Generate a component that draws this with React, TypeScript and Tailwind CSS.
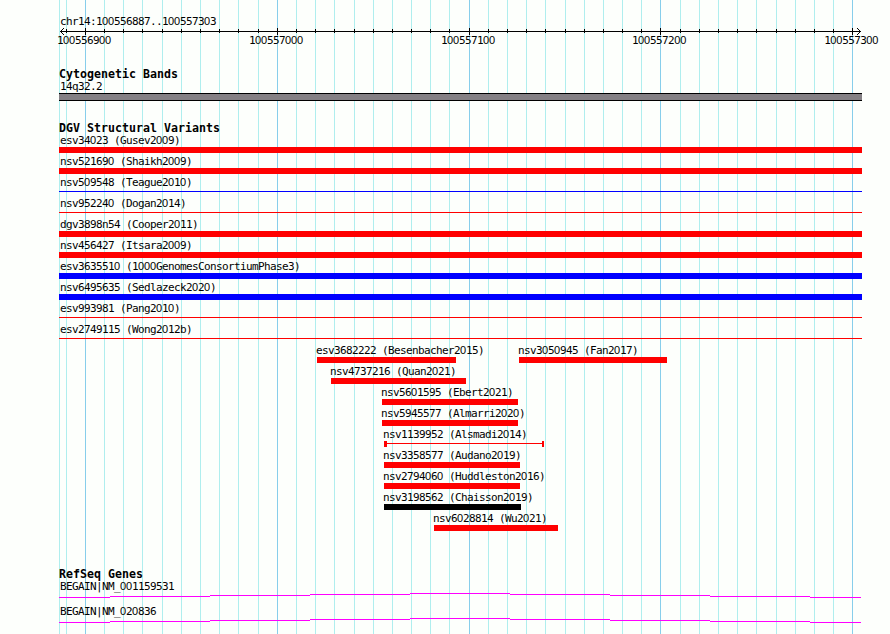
const LIGHT_LINES = [
  59, 66, 104, 123, 142, 162, 181, 200, 219, 238, 258, 296, 315, 334, 354, 373, 392, 411, 430, 449,
  488, 507, 526, 545, 565, 584, 603, 622, 641, 680, 699, 718, 737, 756, 776, 795, 814, 833,
];
const DARK_LINES = [85, 277, 469, 660, 852];

type Variant = { name: string; x: number; w: number; kind: "bar" | "line" | "range"; color: string };

const red = "bg-[#ff0000]";
const blue = "bg-[#0000ff]";

const variants: Variant[][] = [
  [{ name: "esv34023 (Gusev2009)", x: 59, w: 803, kind: "bar", color: red }],
  [{ name: "nsv521690 (Shaikh2009)", x: 59, w: 803, kind: "bar", color: red }],
  [{ name: "nsv509548 (Teague2010)", x: 59, w: 803, kind: "line", color: blue }],
  [{ name: "nsv952240 (Dogan2014)", x: 59, w: 803, kind: "line", color: red }],
  [{ name: "dgv3898n54 (Cooper2011)", x: 59, w: 803, kind: "bar", color: red }],
  [{ name: "nsv456427 (Itsara2009)", x: 59, w: 803, kind: "bar", color: red }],
  [{ name: "esv3635510 (1000GenomesConsortiumPhase3)", x: 59, w: 803, kind: "bar", color: blue }],
  [{ name: "nsv6495635 (Sedlazeck2020)", x: 59, w: 803, kind: "bar", color: blue }],
  [{ name: "esv993981 (Pang2010)", x: 59, w: 803, kind: "line", color: red }],
  [{ name: "esv2749115 (Wong2012b)", x: 59, w: 803, kind: "line", color: red }],
  [
    { name: "esv3682222 (Besenbacher2015)", x: 317, w: 139, kind: "bar", color: red },
    { name: "nsv3050945 (Fan2017)", x: 519, w: 148, kind: "bar", color: red },
  ],
  [{ name: "nsv4737216 (Quan2021)", x: 331, w: 135, kind: "bar", color: red }],
  [{ name: "nsv5601595 (Ebert2021)", x: 382, w: 136, kind: "bar", color: red }],
  [{ name: "nsv5945577 (Almarri2020)", x: 382, w: 136, kind: "bar", color: red }],
  [{ name: "nsv1139952 (Alsmadi2014)", x: 384, w: 160, kind: "range", color: red }],
  [{ name: "nsv3358577 (Audano2019)", x: 384, w: 136, kind: "bar", color: red }],
  [{ name: "nsv2794060 (Huddleston2016)", x: 384, w: 136, kind: "bar", color: red }],
  [{ name: "nsv3198562 (Chaisson2019)", x: 384, w: 137, kind: "bar", color: "bg-black" }],
  [{ name: "nsv6028814 (Wu2021)", x: 434, w: 124, kind: "bar", color: red }],
];

const genes = ["BEGAIN|NM_001159531", "BEGAIN|NM_020836"];

function Gridlines() {
  return (
    <svg className="absolute inset-0" width="890" height="634" shapeRendering="crispEdges">
      {LIGHT_LINES.map((x) => (
        <rect key={x} x={x} y={0} width={1} height={634} fill="#afeeee" />
      ))}
      {DARK_LINES.map((x) => (
        <rect key={x} x={x} y={0} width={1} height={634} fill="#87ceeb" />
      ))}
    </svg>
  );
}

function Label({ text }: { text: string }) {
  // the font's zero is dotted, so zeros are taken from the sans face
  return (
    <span className="block h-3 whitespace-pre text-[11px] leading-3 tracking-[-0.622px]">
      {text.split(/(0)/).map((part, i) =>
        part === "0" ? (
          <span key={i} className="font-['Liberation_Sans'] tracking-[-0.118px]">0</span>
        ) : (
          part
        ),
      )}
    </span>
  );
}

function Heading({ text }: { text: string }) {
  return (
    <h2 className="ml-[59px] h-[13px] whitespace-pre text-[11.6px] font-bold leading-[13px] tracking-[0.016px]">
      {text}
    </h2>
  );
}

function Ruler() {
  return (
    <svg className="block" width="890" height="8" viewBox="0 27 890 8" shapeRendering="crispEdges">
      <rect x={60} y={31} width={801} height={1} />
      {LIGHT_LINES.slice(1).map((x) => (
        <rect key={x} x={x} y={29} width={1} height={4} />
      ))}
      {DARK_LINES.map((x) => (
        <rect key={x} x={x} y={28} width={1} height={7} />
      ))}
      <path d="M61 30h1v1h-1zM62 29h1v1h-1zM63 28h1v1h-1zM61 32h1v1h-1zM62 33h1v1h-1zM63 34h1v1h-1z" />
      <path d="M859 30h1v1h-1zM858 29h1v1h-1zM857 28h1v1h-1zM859 32h1v1h-1zM858 33h1v1h-1zM857 34h1v1h-1z" />
    </svg>
  );
}

function Glyph({ kind, color }: { kind: Variant["kind"]; color: string }) {
  if (kind === "bar") return <div className={`h-1.5 ${color}`} />;
  if (kind === "line") return <div className="pt-0.5"><div className={`h-px ${color}`} /></div>;
  return (
    <div className="flex h-1.5 items-start">
      <div className={`h-1.5 w-[3px] ${color}`} />
      <div className={`mt-0.5 h-px grow ${color}`} />
      <div className={`h-1.5 w-0.5 ${color}`} />
    </div>
  );
}

function VariantRow({ items }: { items: Variant[] }) {
  return (
    <div className="grid h-[21px]">
      {items.map((v) => (
        <div key={v.name} className="col-start-1 row-start-1" style={{ marginLeft: v.x, width: v.w }}>
          <div className={v.x === 59 ? "ml-px h-[13px]" : "-ml-px h-[13px]"}>
            <Label text={v.name} />
          </div>
          <Glyph kind={v.kind} color={v.color} />
        </div>
      ))}
    </div>
  );
}

function GeneRow({ name }: { name: string }) {
  return (
    <div className="h-[25px]">
      <div className="ml-[60px] h-[13px]">
        <Label text={name} />
      </div>
      <svg className="block" width="890" height="6" shapeRendering="crispEdges" fill="#ff00ff">
        <rect x={59} y={4} width={51} height={1} />
        <rect x={110} y={3} width={100} height={1} />
        <rect x={210} y={2} width={100} height={1} />
        <rect x={310} y={1} width={100} height={1} />
        <rect x={410} y={0} width={100} height={1} />
        <rect x={510} y={1} width={100} height={1} />
        <rect x={610} y={2} width={100} height={1} />
        <rect x={710} y={3} width={100} height={1} />
        <rect x={810} y={4} width={51} height={1} />
      </svg>
    </div>
  );
}

export default function App() {
  return (
    <div className="relative h-[634px] w-[890px] overflow-hidden bg-[#fdfffc] font-['DejaVu_Sans_Mono',monospace] text-black">
      <Gridlines />
      <main className="relative flex flex-col">
        <div className="ml-[60px] h-[27px] pt-[15px]">
          <Label text="chr14:100556887..100557303" />
        </div>
        <Ruler />
        <div className="-mt-px ml-[57px] flex h-[34px] gap-[138px]">
          <Label text="100556900" />
          <Label text="100557000" />
          <Label text="100557100" />
          <div className="-ml-px">
            <Label text="100557200" />
          </div>
          <Label text="100557300" />
        </div>

        <Heading text="Cytogenetic Bands" />
        <div className="ml-[60px]">
          <Label text="14q32.2" />
        </div>
        <div className="ml-[59px] h-2 w-[803px] border-y border-black bg-[#848084]" />

        <div className="h-[21px]" />
        <Heading text="DGV Structural Variants" />
        <div className="-mt-px flex flex-col">
          {variants.map((row) => (
            <VariantRow key={row[0].name} items={row} />
          ))}
        </div>

        <div className="h-[35px]" />
        <Heading text="RefSeq Genes" />
        <div className="-mt-px">
          {genes.map((g) => (
            <GeneRow key={g} name={g} />
          ))}
        </div>
      </main>
    </div>
  );
}
